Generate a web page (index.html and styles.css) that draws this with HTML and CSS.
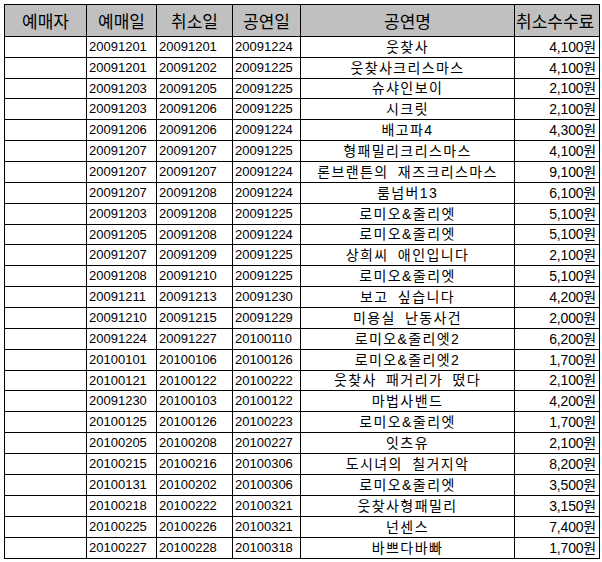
FILE: index.html
```html
<!DOCTYPE html>
<html lang="ko">
<head>
<meta charset="utf-8">
<link rel="stylesheet" href="styles.css">
</head>
<body>
<table class="grid">
<colgroup>
<col class="c-user"><col class="c-date1"><col class="c-date2"><col class="c-date3"><col class="c-name"><col class="c-fee">
</colgroup>
<thead>
<tr><th>예매자</th><th>예매일</th><th>취소일</th><th>공연일</th><th>공연명</th><th class="fee-h">취소수수료</th></tr>
</thead>
<tbody>
<tr><td></td><td class="d">20091201</td><td class="d">20091201</td><td class="d">20091224</td><td class="n">웃찾사</td><td class="f">4,100원</td></tr>
<tr><td></td><td class="d">20091201</td><td class="d">20091202</td><td class="d">20091225</td><td class="n">웃찾사크리스마스</td><td class="f">4,100원</td></tr>
<tr class="short"><td></td><td class="d">20091203</td><td class="d">20091205</td><td class="d">20091225</td><td class="n">슈샤인보이</td><td class="f">2,100원</td></tr>
<tr><td></td><td class="d">20091203</td><td class="d">20091206</td><td class="d">20091225</td><td class="n">시크릿</td><td class="f">2,100원</td></tr>
<tr><td></td><td class="d">20091206</td><td class="d">20091206</td><td class="d">20091224</td><td class="n">배고파4</td><td class="f">4,300원</td></tr>
<tr><td></td><td class="d">20091207</td><td class="d">20091207</td><td class="d">20091225</td><td class="n">형패밀리크리스마스</td><td class="f">4,100원</td></tr>
<tr><td></td><td class="d">20091207</td><td class="d">20091207</td><td class="d">20091224</td><td class="n">론브랜튼의 재즈크리스마스</td><td class="f">9,100원</td></tr>
<tr><td></td><td class="d">20091207</td><td class="d">20091208</td><td class="d">20091224</td><td class="n">룸넘버13</td><td class="f">6,100원</td></tr>
<tr><td></td><td class="d">20091203</td><td class="d">20091208</td><td class="d">20091225</td><td class="n">로미오&amp;줄리엣</td><td class="f">5,100원</td></tr>
<tr class="short"><td></td><td class="d">20091205</td><td class="d">20091208</td><td class="d">20091224</td><td class="n">로미오&amp;줄리엣</td><td class="f">5,100원</td></tr>
<tr><td></td><td class="d">20091207</td><td class="d">20091209</td><td class="d">20091225</td><td class="n">상희씨 애인입니다</td><td class="f">2,100원</td></tr>
<tr><td></td><td class="d">20091208</td><td class="d">20091210</td><td class="d">20091225</td><td class="n">로미오&amp;줄리엣</td><td class="f">5,100원</td></tr>
<tr><td></td><td class="d">20091211</td><td class="d">20091213</td><td class="d">20091230</td><td class="n">보고 싶습니다</td><td class="f">4,200원</td></tr>
<tr><td></td><td class="d">20091210</td><td class="d">20091215</td><td class="d">20091229</td><td class="n">미용실 난동사건</td><td class="f">2,000원</td></tr>
<tr><td></td><td class="d">20091224</td><td class="d">20091227</td><td class="d">20100110</td><td class="n">로미오&amp;줄리엣2</td><td class="f">6,200원</td></tr>
<tr><td></td><td class="d">20100101</td><td class="d">20100106</td><td class="d">20100126</td><td class="n">로미오&amp;줄리엣2</td><td class="f">1,700원</td></tr>
<tr class="short"><td></td><td class="d">20100121</td><td class="d">20100122</td><td class="d">20100222</td><td class="n">웃찾사 패거리가 떴다</td><td class="f">2,100원</td></tr>
<tr><td></td><td class="d">20091230</td><td class="d">20100103</td><td class="d">20100122</td><td class="n">마법사밴드</td><td class="f">4,200원</td></tr>
<tr><td></td><td class="d">20100125</td><td class="d">20100126</td><td class="d">20100223</td><td class="n">로미오&amp;줄리엣</td><td class="f">1,700원</td></tr>
<tr><td></td><td class="d">20100205</td><td class="d">20100208</td><td class="d">20100227</td><td class="n">잇츠유</td><td class="f">2,100원</td></tr>
<tr><td></td><td class="d">20100215</td><td class="d">20100216</td><td class="d">20100306</td><td class="n">도시녀의 칠거지악</td><td class="f">8,200원</td></tr>
<tr><td></td><td class="d">20100131</td><td class="d">20100202</td><td class="d">20100306</td><td class="n">로미오&amp;줄리엣</td><td class="f">3,500원</td></tr>
<tr><td></td><td class="d">20100218</td><td class="d">20100222</td><td class="d">20100321</td><td class="n">웃찾사형패밀리</td><td class="f">3,150원</td></tr>
<tr><td></td><td class="d">20100225</td><td class="d">20100226</td><td class="d">20100321</td><td class="n">넌센스</td><td class="f">7,400원</td></tr>
<tr><td></td><td class="d">20100227</td><td class="d">20100228</td><td class="d">20100318</td><td class="n">바쁘다바빠</td><td class="f">1,700원</td></tr>
</tbody>
</table>
</body>
</html>
```
FILE: styles.css
```css
html, body {
  margin: 0;
  padding: 0;
  background: #ffffff;
}
body {
  padding: 4px 0 0 4px;
  font-family: "Liberation Sans", "Noto Sans CJK KR", sans-serif;
  color: #000000;
}
.grid {
  border-collapse: collapse;
  table-layout: fixed;
  width: 595px;
}
.c-user { width: 82px; }
.c-date1 { width: 70px; }
.c-date2 { width: 76px; }
.c-date3 { width: 68px; }
.c-name { width: 214px; }
.c-fee { width: 85px; }
.grid th, .grid td {
  border: 1px solid #000000;
  padding: 0;
  white-space: nowrap;
  overflow: hidden;
}
.grid th {
  height: 31px;
  background: #c0c0c0;
  font-family: "Noto Sans CJK KR", sans-serif;
  font-weight: 400;
  font-size: 17px;
  text-align: center;
  line-height: 31px;
}
.grid th.fee-h {
  text-align: left;
  padding-left: 1px;
}
.grid td {
  height: 20px;
  font-size: 13px;
  line-height: 20px;
}
.grid tr.short td {
  height: 19px;
  line-height: 19px;
}
.grid td.d {
  text-align: left;
  padding-left: 2px;
  letter-spacing: 0;
}
.grid td.n {
  text-align: center;
  font-size: 14px;
  letter-spacing: 1.4px;
  word-spacing: 4px;
}
.grid td.f {
  text-align: right;
  padding-right: 3px;
  font-size: 14px;
  letter-spacing: -0.2px;
}
```
